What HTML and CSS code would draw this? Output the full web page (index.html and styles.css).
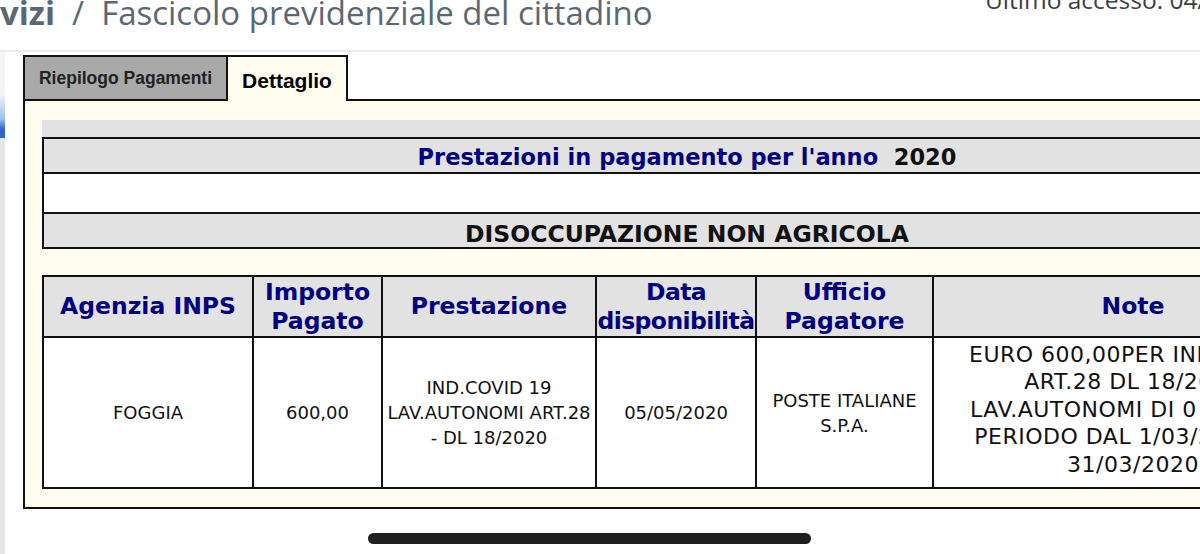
FILE: index.html
```html
<!DOCTYPE html>
<html lang="it">
<head>
<meta charset="utf-8">
<title>Fascicolo previdenziale del cittadino</title>
<link rel="stylesheet" href="styles.css">
</head>
<body>
<div class="page">
  <header class="top">
    <div class="crumb"><b class="crumb-prev">vizi</b><span class="crumb-sep">/</span><span class="crumb-cur">Fascicolo previdenziale del cittadino</span></div>
    <div class="access">Ultimo accesso: 04/05/2020 10:32</div>
  </header>
  <div class="main">
    <div class="rail">
      <div class="rail-top"></div>
      <div class="rail-blue"></div>
      <div class="rail-rest"></div>
    </div>
    <div class="content">
      <div class="tabs">
        <div class="tab tab-off">Riepilogo Pagamenti</div>
        <div class="tab tab-on">Dettaglio</div>
        <div class="tab-fill"></div>
      </div>
      <div class="panel">
        <div class="summary">
          <div class="srow srow-title">Prestazioni in pagamento per l'anno&nbsp; <span class="year">2020</span></div>
          <div class="srow srow-empty"></div>
          <div class="srow srow-kind">DISOCCUPAZIONE NON AGRICOLA</div>
        </div>
        <table class="pay">
          <colgroup>
            <col class="c1"><col class="c2"><col class="c3"><col class="c4"><col class="c5"><col class="c6">
          </colgroup>
          <thead>
            <tr>
              <th>Agenzia INPS</th>
              <th>Importo<br>Pagato</th>
              <th>Prestazione</th>
              <th class="th-tight">Data<br>disponibilità</th>
              <th>Ufficio<br>Pagatore</th>
              <th>Note</th>
            </tr>
          </thead>
          <tbody>
            <tr>
              <td>FOGGIA</td>
              <td>600,00</td>
              <td>IND.COVID 19<br>LAV.AUTONOMI ART.28<br>- DL 18/2020</td>
              <td>05/05/2020</td>
              <td>POSTE ITALIANE<br>S.P.A.</td>
              <td class="td-note">EURO 600,00PER INDENNITA<br>ART.28 DL 18/2020<br>LAV.AUTONOMI DI 0 MARZO,<br>PERIODO DAL 1/03/2020 AL<br>31/03/2020</td>
            </tr>
          </tbody>
        </table>
      </div>
    </div>
  </div>
  <div class="home-bar"></div>
</div>
</body>
</html>
```

FILE: styles.css
```css
html, body {
  margin: 0;
  padding: 0;
  background: #ffffff;
  overflow: hidden;
}

.page {
  position: relative;
  width: 1200px;
  height: 554px;
  overflow: hidden;
}

.top {
  display: flex;
  width: 1200px;
  height: 50px;
  border-bottom: 2px solid #ececec;
  box-sizing: content-box;
  overflow: hidden;
}

.crumb {
  flex-shrink: 0;
  margin-top: -9px;
  font-family: "Open Sans", sans-serif;
  font-size: 33px;
  line-height: 44px;
  color: #5b6874;
  white-space: nowrap;
}

.crumb-prev {
  font-weight: 700;
}

.crumb-sep {
  margin: 0 17px 0 17px;
}

.access {
  margin-left: auto;
  width: 215px;
  flex-shrink: 0;
  margin-top: -17px;
  font-family: "Open Sans", sans-serif;
  font-size: 24.5px;
  line-height: 34px;
  color: #3a3f44;
  white-space: nowrap;
}

.main {
  display: flex;
  height: 502px;
}

.rail {
  width: 5px;
  flex-shrink: 0;
  display: flex;
  flex-direction: column;
}

.rail-top {
  height: 43px;
  background: #f3f4f5;
}

.rail-blue {
  height: 43px;
  background: linear-gradient(180deg, #eef4fa 0%, #9cc3e8 55%, #2f63c8 80%, #2f63c8 100%);
}

.rail-rest {
  flex: 1;
  background: #e6e6e6;
}

.content {
  margin-left: 18px;
  padding-top: 3px;
  width: 1400px;
  flex-shrink: 0;
}

.tabs {
  display: flex;
  height: 46px;
}

.tab {
  box-sizing: border-box;
  height: 46px;
  display: flex;
  align-items: center;
  justify-content: center;
  font-family: "Liberation Sans", Arial, sans-serif;
  font-weight: 700;
}

.tab-off {
  width: 205px;
  border: 2px solid #111;
  background: #a9a9a9;
  color: #222;
  font-size: 17.5px;
  padding-top: 1px;
}

.tab-on {
  width: 120px;
  border-top: 2px solid #111;
  border-right: 2px solid #111;
  background: #fefdf0;
  color: #000;
  font-size: 21px;
  padding-top: 4px;
}

.tab-fill {
  flex: 1;
  border-bottom: 2px solid #111;
}

.panel {
  background: #fefdf0;
  border-left: 2px solid #111;
  border-bottom: 2px solid #111;
  padding: 19px 0 18px 17px;
}

.summary {
  width: 1290px;
  background: #e2e2e2;
  padding-top: 17px;
  margin-bottom: 26px;
}

.srow {
  box-sizing: border-box;
  border: 2px solid #111;
  border-bottom: none;
  font-family: "DejaVu Sans", Verdana, sans-serif;
  font-weight: 700;
  text-align: center;
}

.srow-title {
  height: 35px;
  padding-top: 5px;
  font-size: 22.5px;
  line-height: 27px;
  color: #000080;
}

.year {
  color: #111;
}

.srow-empty {
  height: 40px;
  background: #ffffff;
}

.srow-kind {
  height: 37px;
  border-bottom: 2px solid #111;
  padding-top: 7px;
  font-size: 23.5px;
  line-height: 27px;
  color: #111;
}

.pay {
  width: 1290px;
  table-layout: fixed;
  border-collapse: collapse;
  font-family: "DejaVu Sans", Verdana, sans-serif;
}

.c1 { width: 210px; }
.c2 { width: 129px; }
.c3 { width: 214px; }
.c4 { width: 160px; }
.c5 { width: 177px; }
.c6 { width: 400px; }

.pay th,
.pay td {
  border: 2px solid #111;
  text-align: center;
  vertical-align: middle;
  padding: 0;
  white-space: nowrap;
  overflow: hidden;
}

.pay th {
  height: 59px;
  background: #e2e2e2;
  color: #000080;
  font-size: 23.5px;
  line-height: 29px;
  font-weight: 700;
}

.pay .th-tight {
  letter-spacing: -0.6px;
}

.pay td {
  height: 149px;
  background: #ffffff;
  color: #111;
  font-size: 18px;
  line-height: 25px;
}

.pay .td-note {
  font-size: 22px;
  line-height: 27.5px;
  letter-spacing: 0.5px;
  padding-bottom: 6px;
  box-sizing: border-box;
}

.home-bar {
  position: absolute;
  left: 368px;
  top: 533px;
  width: 443px;
  height: 11px;
  border-radius: 6px;
  background: #1f1f1f;
}
```
